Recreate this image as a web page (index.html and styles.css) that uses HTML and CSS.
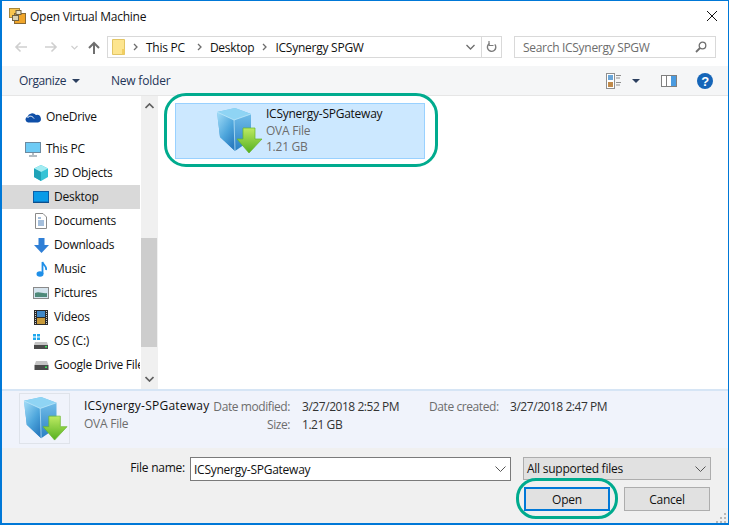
FILE: index.html
```html
<!DOCTYPE html>
<html lang="en">
<head>
<meta charset="utf-8">
<title>Open Virtual Machine</title>
<link rel="stylesheet" href="styles.css">
</head>
<body>
<svg class="defs" width="0" height="0">
  <defs>
    <linearGradient id="cubeL" x1="0" y1="0" x2=".7" y2="1"><stop offset="0" stop-color="#a5def8"/><stop offset=".6" stop-color="#4ea6dc"/><stop offset="1" stop-color="#2a7cc0"/></linearGradient>
    <linearGradient id="cubeR" x1="0" y1="0" x2="0" y2="1"><stop offset="0" stop-color="#7cc6ee"/><stop offset="1" stop-color="#2a80c4"/></linearGradient>
    <linearGradient id="arrowG" x1="0" y1="0" x2="0" y2="1"><stop offset="0" stop-color="#bdea62"/><stop offset="1" stop-color="#55b020"/></linearGradient>
    <symbol id="ova" viewBox="0 0 48 48">
      <path d="M2 5 20 1 36 7 36 33 20 44 5 30Z" fill="url(#cubeR)"/>
      <path d="M2 5 19 13 20 44 5 30Z" fill="url(#cubeL)"/>
      <path d="M2 5 20 1 36 7 19 13Z" fill="#8fd4f4"/>
      <path d="M2 5 19 13 36 7M19 13 20 44" fill="none" stroke="#c8ecfa" stroke-width=".7"/>
      <path d="M28 21H40V32H47L34 46 22 32H28Z" fill="url(#arrowG)" stroke="#66b52a" stroke-width=".7"/>
    </symbol>
  </defs>
</svg>
<div class="window">
  <header class="titlebar">
    <svg class="app-icon" width="17" height="17" viewBox="0 0 17 17"><rect x=".5" y=".5" width="10" height="9" fill="#f7c54f" stroke="#a9873a"/><rect x="5.500" y="5.500" width="11" height="10" fill="#f0a52a" stroke="#8a6a34"/><rect x="7" y="2.500" width="5" height="4" fill="#e9e2c8" stroke="#6f6244"/><rect x="3.500" y="7.500" width="6" height="5" fill="#d9d2b6" stroke="#6f6244"/></svg>
    <span class="title">Open Virtual Machine</span>
    <svg class="close" width="12" height="12" viewBox="0 0 12 12"><path d="M1 1 11 11M11 1 1 11" stroke="#111" stroke-width="1" fill="none"/></svg>
  </header>
  <nav class="navbar">
    <svg class="nav-arrow" width="14" height="12" viewBox="0 0 14 12"><path d="M13 6H2M6.500 1.500 2 6l4.500 4.500" fill="none" stroke="#cfcfcf" stroke-width="1.600"/></svg>
    <svg class="nav-arrow fwd" width="14" height="12" viewBox="0 0 14 12"><path d="M1 6h11M7.500 1.500 12 6l-4.500 4.500" fill="none" stroke="#cfcfcf" stroke-width="1.600"/></svg>
    <svg class="nav-drop" width="7" height="5" viewBox="0 0 7 5"><path d="M.5 1 3.500 4 6.500 1" fill="none" stroke="#cfcfcf" stroke-width="1.200"/></svg>
    <svg class="nav-up" width="12" height="13" viewBox="0 0 12 13"><path d="M6 13V2M1 7 6 2l5 5" fill="none" stroke="#6f6f6f" stroke-width="2"/></svg>
    <div class="address">
      <svg class="addr-folder" width="13" height="16" viewBox="0 0 13 16"><path d="M.5.500H12.500V15.500H.5Z" fill="#fde58f" stroke="#e2c565"/><path d="M10 10h2.500v5.500H10Z" fill="#f2cf62"/></svg>
      <svg class="crumb-sep" width="5" height="8" viewBox="0 0 5 8"><path d="M1 1 4 4 1 7" fill="none" stroke="#6d6d6d" stroke-width="1.300"/></svg>
      <span class="crumb crumb-pc">This PC</span>
      <svg class="crumb-sep" width="5" height="8" viewBox="0 0 5 8"><path d="M1 1 4 4 1 7" fill="none" stroke="#6d6d6d" stroke-width="1.300"/></svg>
      <span class="crumb crumb-desk">Desktop</span>
      <svg class="crumb-sep" width="5" height="8" viewBox="0 0 5 8"><path d="M1 1 4 4 1 7" fill="none" stroke="#6d6d6d" stroke-width="1.300"/></svg>
      <span class="crumb">ICSynergy SPGW</span>
      <svg class="addr-drop" width="9" height="6" viewBox="0 0 9 6"><path d="M.5 1 4.500 5 8.500 1" fill="none" stroke="#6d6d6d" stroke-width="1.300"/></svg>
      <div class="addr-refresh"><svg width="11" height="12" viewBox="0 0 11 12"><path d="M8.800 3.400A4.200 4.200 0 1 1 3.500 2.500" fill="none" stroke="#7b7b7b" stroke-width="1.400"/><path d="M3 0V4.500H7.500" fill="none" stroke="#7b7b7b" stroke-width="1.200"/></svg></div>
    </div>
    <div class="search">
      <span class="search-text">Search ICSynergy SPGW</span>
      <svg width="12" height="12" viewBox="0 0 12 12"><circle cx="7.500" cy="4.500" r="3.300" fill="none" stroke="#6f6f6f" stroke-width="1.300"/><path d="M5 7 1 11" stroke="#6f6f6f" stroke-width="1.800"/></svg>
    </div>
  </nav>
  <div class="toolbar">
    <span class="tool-label">Organize</span>
    <span class="caret"></span>
    <span class="tool-label new-folder">New folder</span>
    <svg class="view-icon" width="16" height="16" viewBox="0 0 16 16"><rect x=".5" y=".5" width="8" height="15" fill="#fff" stroke="#8f8f8f"/><rect x="2" y="2" width="5" height="5" fill="#6aa6d8"/><rect x="2" y="9" width="5" height="5" fill="#c08a4a"/><path d="M10 2.500h5M10 5h4M10 9.500h5M10 12h4" stroke="#8f8f8f"/></svg>
    <span class="caret dark view-caret"></span>
    <svg class="pane-icon" width="16" height="12" viewBox="0 0 16 12"><rect x=".5" y=".5" width="15" height="11" fill="#fff" stroke="#7f7f7f"/><rect x="10" y="1" width="5" height="10" fill="#4a9be0"/><path d="M5.500 1v10" stroke="#7f7f7f"/></svg>
    <svg class="help-icon" width="16" height="16" viewBox="0 0 16 16"><circle cx="8" cy="8" r="8" fill="#1565b8"/><text x="8" y="12.500" text-anchor="middle" class="help-q">?</text></svg>
  </div>
  <main class="main">
    <aside class="sidebar">
      <div class="side-row top">
        <svg width="16" height="11" viewBox="0 0 16 11"><path d="M3 10.500a3 3 0 0 1-.5-5.800A5 5 0 0 1 11 3 3.700 3.700 0 0 1 13 10.500Z" fill="#0f4fa8"/><path d="M2.500 6C4 3.500 7 3.500 9 6.500" fill="none" stroke="#fff"/></svg>
        <span>OneDrive</span>
      </div>
      <div class="side-row pc">
        <svg width="16" height="15" viewBox="0 0 16 15"><rect x=".5" y=".5" width="15" height="10" fill="#6ecbf5" stroke="#6c8aa0"/><path d="M8 11v2M4 14h8" stroke="#9aa7b0" stroke-width="1.500"/></svg>
        <span>This PC</span>
      </div>
      <div class="side-row sub">
        <svg width="16" height="16" viewBox="0 0 16 16"><path d="M8 0 15 3.500V12L8 16 1 12V3.500Z" fill="#35c3d6"/><path d="M8 0 15 3.500 8 7 1 3.500Z" fill="#a3ecf2"/><path d="M8 7V16L1 12V3.500Z" fill="#1fa3b8"/></svg>
        <span>3D Objects</span>
      </div>
      <div class="side-row sub selected">
        <svg width="16" height="12" viewBox="0 0 16 12"><rect x=".5" y=".5" width="15" height="10.500" fill="#0a9be8" stroke="#0c5fa8"/><path d="M0 11.500h16" stroke="#0c4f8c"/></svg>
        <span>Desktop</span>
      </div>
      <div class="side-row sub">
        <svg width="12" height="16" viewBox="0 0 12 16"><path d="M.5.500H8L11.500 4V15.500H.5Z" fill="#fff" stroke="#8a8a8a"/><path d="M3 5h3M3 8h6M3 10h6M3 12h6" stroke="#4a7fb8"/></svg>
        <span>Documents</span>
      </div>
      <div class="side-row sub">
        <svg width="15" height="15" viewBox="0 0 15 15"><path d="M4.500 0H10.500V7H15L7.500 15 0 7H4.500Z" fill="#2f7fd6"/></svg>
        <span>Downloads</span>
      </div>
      <div class="side-row sub">
        <svg width="11" height="16" viewBox="0 0 11 16"><ellipse cx="4" cy="13" rx="3.500" ry="2.800" fill="#1f8fe8"/><path d="M6.500 13V1C7 4 11 5 10 9" fill="none" stroke="#1f8fe8" stroke-width="1.800"/></svg>
        <span>Music</span>
      </div>
      <div class="side-row sub">
        <svg width="16" height="12" viewBox="0 0 16 12"><rect x=".5" y=".5" width="15" height="11" fill="#d6e4ee" stroke="#8a8a8a"/><path d="M2 6C6 4 10 7 14 6V10H2Z" fill="#4f8a7a"/></svg>
        <span>Pictures</span>
      </div>
      <div class="side-row sub">
        <svg width="14" height="15" viewBox="0 0 14 15"><rect width="14" height="15" fill="#2b2b2b"/><rect x="3" y="1" width="8" height="6" fill="#3f88c8"/><rect x="3" y="8" width="8" height="6" fill="#c89a3a"/><path d="M1.500 1v13M12.500 1v13" stroke="#ccc" stroke-dasharray="1 1"/></svg>
        <span>Videos</span>
      </div>
      <div class="side-row sub">
        <svg width="16" height="15" viewBox="0 0 16 15"><path d="M0 0h3v2.500H0ZM4 0h3v2.500H4ZM0 3.500h3V6H0ZM4 3.500h3V6H4Z" fill="#1fa8ee"/><path d="M2 8H14L15 11H1Z" fill="#c4c4c4"/><rect x="1" y="11" width="14" height="4" fill="#4a4a4a"/><rect x="12" y="12" width="2" height="1.500" fill="#3be05a"/></svg>
        <span>OS (C:)</span>
      </div>
      <div class="side-row sub">
        <svg width="15" height="9" viewBox="0 0 15 9"><path d="M2 0H13L14.500 4H.5Z" fill="#c4c4c4"/><rect x=".5" y="4" width="14" height="5" fill="#4a4a4a"/><rect x="11" y="5.500" width="2" height="1.500" fill="#3be05a"/></svg>
        <span>Google Drive File</span>
      </div>
    </aside>
    <div class="scrollbar">
      <svg class="scroll-arrow" width="9" height="6" viewBox="0 0 9 6"><path d="M.5 5 4.500 1 8.500 5" fill="none" stroke="#606060" stroke-width="1.700"/></svg>
      <div class="scroll-thumb"></div>
      <svg class="scroll-arrow down" width="9" height="6" viewBox="0 0 9 6"><path d="M.5 1 4.500 5 8.500 1" fill="none" stroke="#606060" stroke-width="1.700"/></svg>
    </div>
    <section class="files">
      <div class="file-item">
        <svg class="file-icon" width="48" height="48"><use href="#ova"/></svg>
        <div class="file-text">
          <div class="file-name">ICSynergy-SPGateway</div>
          <div class="muted">OVA File</div>
          <div class="muted">1.21 GB</div>
        </div>
      </div>
    </section>
  </main>
  <section class="details">
    <div class="thumb"><svg width="46" height="46"><use href="#ova"/></svg></div>
    <div class="name-col">
      <div class="detail-name">ICSynergy-SPGateway</div>
      <div class="muted">OVA File</div>
    </div>
    <div class="detail-grid">
      <span class="muted lbl">Date modified:</span><span class="val">3/27/2018 2:52 PM</span>
      <span class="muted lbl">Date created:</span><span class="val">3/27/2018 2:47 PM</span>
      <span class="muted lbl">Size:</span><span class="val">1.21 GB</span>
    </div>
  </section>
  <footer class="footer">
    <div class="file-row">
      <label class="file-label">File name:</label>
      <div class="name-input"><span>ICSynergy-SPGateway</span>
        <svg width="11" height="6" viewBox="0 0 11 6"><path d="M.5.500 5.500 5.500 10.500.5" fill="none" stroke="#555" stroke-width="1"/></svg>
      </div>
      <div class="type-select"><span>All supported files</span>
        <svg width="11" height="6" viewBox="0 0 11 6"><path d="M.5.500 5.500 5.500 10.500.5" fill="none" stroke="#555" stroke-width="1"/></svg>
      </div>
    </div>
    <div class="btn-row">
      <button class="btn primary">Open</button>
      <button class="btn">Cancel</button>
    </div>
    <svg class="grip" width="11" height="11" viewBox="0 0 11 11"><path d="M8 1h2v2H8ZM4 5h2v2H4ZM8 5h2v2H8ZM0 9h2v2H0ZM4 9h2v2H4ZM8 9h2v2H8Z" fill="#b8b8b8"/></svg>
  </footer>
  <div class="ring ring-file"></div>
  <div class="ring ring-open"></div>
</div>
</body>
</html>
```

FILE: styles.css
```css
* { box-sizing: border-box; }
html, body { margin: 0; padding: 0; }
body { width: 729px; height: 525px; overflow: hidden; background: #fff; }
.defs { position: absolute; }
.window {
  position: relative;
  width: 729px;
  height: 525px;
  display: flex;
  flex-direction: column;
  border: 1px solid #0078d7;
  border-left-width: 2px;
  border-bottom-width: 2px;
  background: #fff;
  font-family: "Open Sans", "Noto Sans", sans-serif;
  font-size: 12px;
  letter-spacing: -0.25px;
  color: #111;
  overflow: hidden;
}
.titlebar { flex: none; height: 31px; display: flex; align-items: center; padding: 0 10px 1px 7px; }
.app-icon { margin-right: 4px; }
.title { flex: 1; }
.navbar { flex: none; height: 34px; display: flex; align-items: center; padding: 0 10px 4px 12px; }
.nav-arrow { margin-right: 16px; }
.nav-arrow.fwd { margin-right: 13px; }
.nav-drop { margin-right: 10px; }
.nav-up { margin-right: 7px; }
.address { width: 395px; height: 22px; border: 1px solid #d9d9d9; display: flex; align-items: center; padding-left: 4px; }
.addr-folder { margin-right: 8px; }
.crumb-sep { margin-right: 8px; }
.crumb-sep:first-of-type { margin-right: 9px; }
.crumb { white-space: nowrap; }
.crumb-pc { margin-right: 12px; }
.crumb-desk { margin-right: 8px; }
.addr-drop { margin-left: auto; margin-right: 6px; }
.addr-refresh { width: 20px; height: 20px; border-left: 1px solid #d9d9d9; display: flex; align-items: center; justify-content: center; }
.search { width: 202px; height: 22px; margin-left: 12px; border: 1px solid #d9d9d9; display: flex; align-items: center; justify-content: space-between; padding: 0 8px 0 8px; }
.search-text { color: #6d6d6d; letter-spacing: -0.3px; }
.toolbar { flex: none; height: 30px; background: #f5f6f7; border-bottom: 1px solid #e6e6e6; display: flex; align-items: center; padding-left: 17px; }
.tool-label { color: #1f3558; letter-spacing: -0.4px; }
.caret { width: 0; height: 0; border-left: 4px solid transparent; border-right: 4px solid transparent; border-top: 4px solid #2b3f5f; margin-left: 6px; }
.new-folder { margin-left: 31px; letter-spacing: -0.2px; }
.view-icon { margin-left: auto; }
.view-caret { margin-left: 10px; margin-right: 21px; }
.pane-icon { margin-right: 20px; }
.help-icon { margin-right: 15px; }
.help-q { font-family: "Liberation Sans", sans-serif; font-size: 13px; font-weight: 700; fill: #fff; }
.main { flex: none; height: 293px; display: flex; background: #fff; }
.sidebar { flex: none; width: 138px; padding-top: 9px; }
.side-row { height: 24px; display: grid; grid-template-columns: 16px 1fr; column-gap: 5px; align-items: center; justify-items: center; white-space: nowrap; overflow: hidden; }
.side-row span { justify-self: start; line-height: 16px; }
.side-row.top { padding-left: 23px; margin-bottom: 8px; }
.side-row.pc { padding-left: 23px; }
.side-row.sub { padding-left: 31px; }
.side-row.selected { background: #d9d9d9; }
.scrollbar { flex: none; width: 16px; margin-left: 1px; background: #f0f0f0; display: flex; flex-direction: column; align-items: center; padding-top: 7px; }
.scroll-arrow { flex: none; }
.scroll-thumb { flex: none; width: 16px; height: 109px; margin-top: 129px; background: #cdcdcd; }
.scroll-arrow.down { margin-top: 29px; }
.files { flex: 1; padding: 7px 0 0 17px; border-left: 1px solid #f0f0f0; }
.file-item { width: 250px; height: 56px; background: #cce8ff; border: 1px solid #99d1ff; display: flex; align-items: center; padding-left: 39px; }
.file-icon { flex: none; margin-right: 3px; }
.file-text { line-height: 16.500px; }
.muted { color: #6d6d6d; }
.details { flex: none; height: 59px; background: #f0f3fb; border-top: 2px solid #d6e5f5; display: flex; padding: 2px 0 0 17px; }
.thumb { flex: none; width: 51px; height: 51px; border: 1px solid #dfe3ea; display: flex; align-items: center; justify-content: center; }
.name-col { flex: none; margin-left: 14px; padding-top: 4px; line-height: 18px; width: 129px; }
.detail-name { white-space: nowrap; letter-spacing: 0.23px; }
.detail-grid { display: grid; grid-template-columns: 77px 139px 69px auto; grid-auto-rows: 18px; padding-top: 4px; align-items: center; }
.lbl { text-align: right; white-space: nowrap; letter-spacing: -0.42px; }
.val { padding-left: 12px; color: #333; white-space: nowrap; letter-spacing: -0.45px; }
.footer { flex: 1; position: relative; background: #f0f0f0; padding: 9px 17px 0 0; display: flex; flex-direction: column; }
.file-row { display: flex; align-items: flex-start; }
.file-label { margin-left: 128px; width: 55px; line-height: 24px; text-align: right; white-space: nowrap; margin-top: -1px; }
.name-input { width: 321px; height: 24px; margin-left: 5px; background: #fff; border: 1px solid #7a7a7a; display: flex; align-items: center; justify-content: space-between; padding: 0 4px 0 3px; }
.type-select { width: 188px; height: 23px; margin-left: 12px; background: #e1e1e1; border: 1px solid #adadad; display: flex; align-items: center; justify-content: space-between; padding: 0 4px 0 3px; }
.btn-row { display: flex; justify-content: flex-end; margin-top: 6px; gap: 14px; padding-right: 1px; }
.btn { width: 86px; height: 24px; padding: 0; background: #e1e1e1; border: 1px solid #adadad; font: inherit; letter-spacing: inherit; color: #111; }
.btn.primary { border: 2px solid #0078d7; }
.grip { position: absolute; right: 1px; bottom: 0; }
.ring { position: absolute; border: 3px solid #00ab8e; background: transparent; }
.ring-file { left: 162px; top: 92px; width: 274px; height: 74px; border-radius: 22px; }
.ring-open { left: 514px; top: 477px; width: 102px; height: 41px; border-radius: 20px; }
```
